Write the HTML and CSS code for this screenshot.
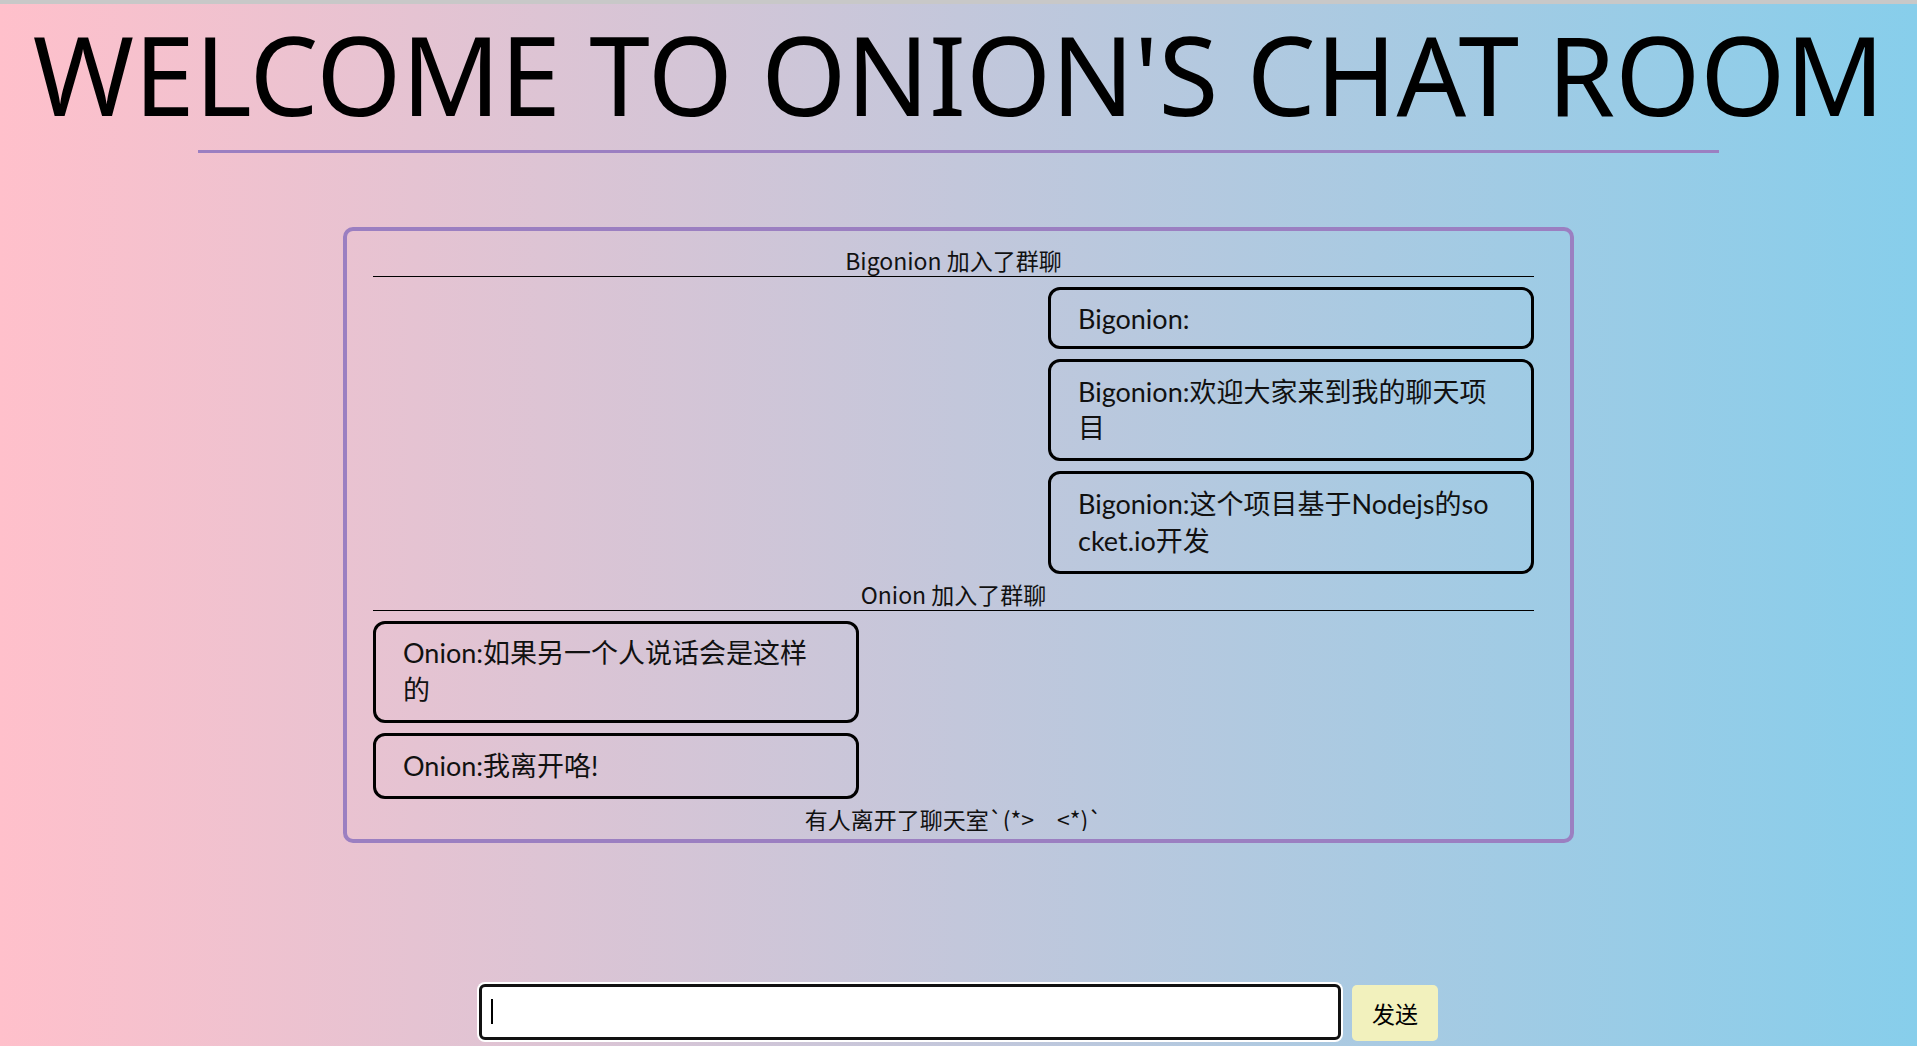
FILE: index.html
```html
<!DOCTYPE html>
<html lang="zh-CN">
<head>
<meta charset="utf-8">
<title>Onion's Chat Room</title>
<link rel="stylesheet" href="styles.css">
</head>
<body>
  <h1 class="title">WELCOME TO ONION'S CHAT ROOM</h1>
  <hr class="divider">
  <main class="chat">
    <div class="chat-log">
      <div class="sys">Bigonion 加入了群聊</div>
      <div class="msg msg-right msg-short">Bigonion:</div>
      <div class="msg msg-right">Bigonion:欢迎大家来到我的聊天项目</div>
      <div class="msg msg-right">Bigonion:这个项目基于Nodejs的socket.io开发</div>
      <div class="sys">Onion 加入了群聊</div>
      <div class="msg">Onion:如果另一个人说话会是这样的</div>
      <div class="msg">Onion:我离开咯!</div>
      <div class="sys">有人离开了聊天室`(*&gt;&#12288;&lt;*)`</div>
    </div>
  </main>
  <form class="composer" onsubmit="return false">
    <div class="field">
      <input class="composer-input" type="text">
    </div>
    <button class="composer-send" type="button">发送</button>
  </form>
</body>
</html>
```

FILE: styles.css
```css
html, body {
  height: 100%;
}

body {
  margin: 0;
  padding: 0 8px;
  box-sizing: border-box;
  min-height: 100vh;
  background:
    linear-gradient(#c8c8c8, #c8c8c8) 0 0 / 100% 4px no-repeat,
    linear-gradient(to right, #ffc0cb, #87ceeb);
  display: flex;
  flex-direction: column;
  font-family: "Noto Sans CJK SC", "Noto Sans", sans-serif;
  color: #000;
  overflow: hidden;
}

.title {
  margin: 0;
  font-family: "Noto Sans", "Noto Sans CJK SC", sans-serif;
  font-weight: 400;
  font-size: 109px;
  line-height: 148px;
  text-align: center;
  white-space: nowrap;
}

.divider {
  width: 80%;
  height: 3px;
  margin: 2px auto 0;
  border: 0;
  background: #9b7fc1;
}

.chat {
  box-sizing: border-box;
  width: 1231px;
  height: 616px;
  margin: 74px auto 0;
  padding: 0 36px 8px 26px;
  border: 4px solid #9b7fc1;
  border-radius: 10px;
  display: flex;
  flex-direction: column;
}

.chat-log {
  flex: 1;
  min-height: 0;
  padding-top: 19px;
  overflow: hidden;
}

.sys {
  padding-bottom: 5px;
  font-size: 23px;
  line-height: 21px;
  text-align: center;
  color: #111;
  border-bottom: 1px solid #000;
}

.msg + .sys {
  margin-top: 10px;
}

.msg {
  box-sizing: border-box;
  width: 486px;
  margin-top: 10px;
  padding: 11.5px 30px 11.5px 27px;
  border: 3px solid #000;
  border-radius: 12px;
  font-family: Lato, "Noto Sans CJK SC", sans-serif;
  font-size: 27px;
  line-height: 36.7px;
  color: #111;
  word-break: break-all;
}

.msg-right {
  margin-left: auto;
}

.msg-short {
  line-height: 33px;
}

.composer {
  margin: auto 0 0;
  padding: 0 0 5px;
  display: flex;
  justify-content: center;
  align-items: flex-end;
  gap: 11px;
}

.field {
  position: relative;
  margin-bottom: 1px;
}

.field::after {
  content: "";
  position: absolute;
  left: 12px;
  top: 15px;
  width: 2px;
  height: 25px;
  background: #000;
}

.composer-input {
  display: block;
  box-sizing: border-box;
  width: 862px;
  height: 56px;
  margin: 0;
  padding: 0 12px;
  border: 3px solid #111;
  border-radius: 6px;
  box-shadow: 0 0 0 2px #fff;
  background: #fff;
  outline: none;
  font-family: "Noto Sans CJK SC", sans-serif;
  font-size: 26px;
}

.composer-send {
  box-sizing: border-box;
  width: 86px;
  height: 56px;
  padding: 0;
  border: 0;
  border-radius: 5px;
  background: #f2f1bd;
  font-family: "Noto Sans CJK SC", sans-serif;
  font-size: 23px;
  color: #000;
}
```
